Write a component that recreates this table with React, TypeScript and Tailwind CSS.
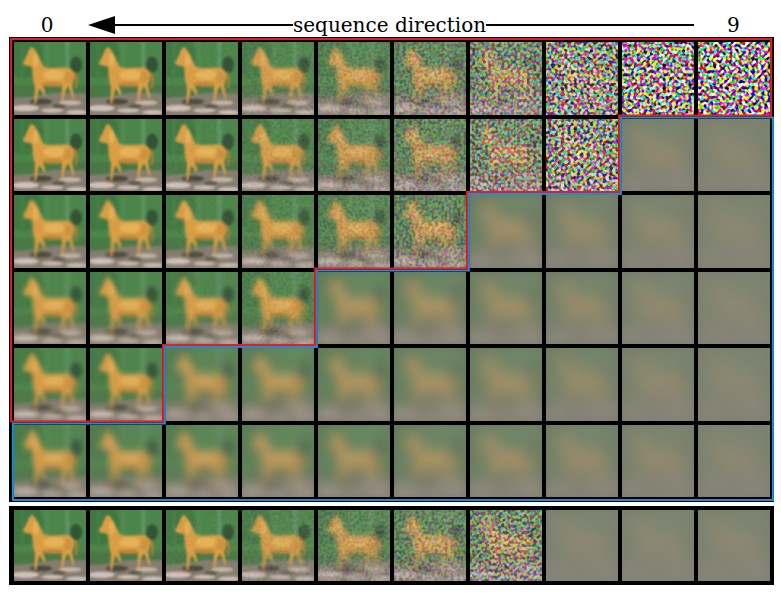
type Look = { blur: number; fade: number; noise: number }

// how many cells per row sit inside the red (noisy) staircase
const RED_COUNT = [10, 8, 6, 4, 2, 0]
const NOISE = [0, 0, 0.02, 0.05, 0.1, 0.2, 0.4, 0.68, 0.86, 0.95]
const ROW_BLUR = [0.5, 0.55, 0.65, 0.9, 1.0, 1.2]
const COLS = [0, 1, 2, 3, 4, 5, 6, 7, 8, 9]

function lookFor(r: number, c: number): Look {
  if (c < RED_COUNT[r]) {
    return {
      blur: ROW_BLUR[r] + (c >= 3 ? 0.18 * (c - 2) : 0),
      fade: c >= 3 ? 0.07 * (c - 2) : r >= 3 ? 0.06 : 0,
      noise: NOISE[c],
    }
  }
  return { blur: 1.3 + 0.35 * c, fade: Math.min(0.86, 0.12 + 0.085 * c), noise: 0 }
}

function bottomLook(c: number): Look {
  if (c < 7) return lookFor(0, c)
  return { blur: 4, fade: 0.86, noise: 0 }
}

function Scene() {
  return (
    <>
      <rect x="-4" y="-4" width="40" height="40" fill="#4c8549" />
      <ellipse cx="4" cy="6" rx="9" ry="10" fill="#3b6f3d" opacity="0.6" />
      <rect x="22.8" y="-4" width="1.8" height="22" fill="#7faa92" opacity="0.4" />
      <rect x="14" y="-4" width="1.4" height="18" fill="#62985f" opacity="0.35" />
      <rect x="3" y="-4" width="1.2" height="20" fill="#5e955d" opacity="0.3" />
      <ellipse cx="27.6" cy="10" rx="2.6" ry="3.6" fill="#2f4a33" opacity="0.85" />
      <rect x="-4" y="19" width="40" height="8" fill="#4a7845" />
      <path d="M-4 25 L8 24.2 L18 22.4 L36 22.8 L36 36 L-4 36 Z" fill="#857d6f" />
      <ellipse cx="12" cy="26.3" rx="5" ry="1.3" fill="#4b4a3d" />
      <ellipse cx="5" cy="29.2" rx="6" ry="1.4" fill="#d2c1ba" />
      <ellipse cx="17" cy="30.2" rx="5" ry="1" fill="#cdbcb4" />
      <ellipse cx="25" cy="26.8" rx="5" ry="1.1" fill="#c4b4a9" />
      <ellipse cx="28" cy="31" rx="5" ry="1" fill="#cfbfb8" />
      <ellipse cx="20" cy="28.3" rx="3" ry="0.8" fill="#5a5747" />
      <path
        d="M26.2 12.8 C28.4 13.5 29 16.5 27.8 20.5 L27 20.3 C27.6 17 27.2 15 25.8 14.2 Z"
        fill="#b27c3a"
      />
      <path
        d="M7.6 2.2 L8.6 2.6 C10 4 11.5 7 13 10.8 C15 11.8 19 11.4 22 11.3 C24.5 11.2 26.2 12 26.6 14.2 C26.9 16 26.3 17.5 25.8 18.6 L26.4 22.5 L26.9 24.6 L26.1 24.9 L25.2 22.4 L24.2 19.6 L23.3 20.5 L22.4 23 L21.9 26.2 L21.1 26.4 L21.2 22.6 L21.3 19.4 C19 19.8 15 19.8 12.8 19.2 L13.6 21.2 L14 23.2 L13.3 23.6 L12.2 21.6 L11.2 20.4 L10.5 23.5 L9.9 27 L9 27.2 L9.2 23.2 L9.3 19.6 C8.3 17 8.3 13.5 8 11 C7 10.4 5.8 10.4 4.6 10.1 L4 9 L5 7.4 C5.8 5.8 6.4 4 7 3 Z"
        fill="#d99e45"
      />
      <ellipse cx="18" cy="14.6" rx="5" ry="2.2" fill="#f0c26a" opacity="0.55" />
      <ellipse cx="9.6" cy="8" rx="1.3" ry="3" fill="#f0c26a" opacity="0.5" />
      <ellipse cx="17" cy="18.6" rx="5" ry="0.9" fill="#a86e2c" opacity="0.5" />
      <ellipse cx="24" cy="15.5" rx="2" ry="2.6" fill="#c38838" opacity="0.5" />
    </>
  )
}

function Tile({ id, seed, look, tall }: { id: string; seed: number; look: Look; tall?: boolean }) {
  return (
    <svg
      viewBox="0 0 32 32"
      preserveAspectRatio="none"
      className={tall ? "block w-[72px] h-[72.5px]" : "block w-[72px] h-[71px]"}
    >
      <defs>
        <filter
          id={id}
          filterUnits="userSpaceOnUse"
          x="-4"
          y="-4"
          width="40"
          height="40"
          colorInterpolationFilters="sRGB"
        >
          <feGaussianBlur in="SourceGraphic" stdDeviation={look.blur} result="bl" />
          <feFlood floodColor="#858478" result="gr" />
          <feComposite in="bl" in2="gr" operator="arithmetic" k1={0} k2={1 - look.fade} k3={look.fade} k4={0} result="mx" />
          <feTurbulence type="fractalNoise" baseFrequency="0.7" numOctaves={1} seed={seed} result="tu" />
          <feComponentTransfer in="tu" result="nz">
            <feFuncR type="linear" slope="6" intercept="-2.3" />
            <feFuncG type="linear" slope="6" intercept="-2.4" />
            <feFuncB type="linear" slope="6" intercept="-2.4" />
            <feFuncA type="linear" slope="0" intercept="1" />
          </feComponentTransfer>
          <feComposite in="mx" in2="nz" operator="arithmetic" k1={0} k2={1 - look.noise} k3={look.noise} k4={0} />
        </filter>
      </defs>
      <g filter={`url(#${id})`}>
        <Scene />
      </g>
    </svg>
  )
}

// red wraps the noisy staircase, blue wraps the faded part below it
const RED_PATH =
  "M3 385.5 L3 3 L763 3 L763 79.5 L611 79.5 L611 156 L459 156 L459 232.5 L307 232.5 L307 309 L155 309 L155 385.5 Z"
const BLUE_PATH =
  "M3 385.5 L3 462 L763 462 L763 79.5 L611 79.5 L611 156 L459 156 L459 232.5 L307 232.5 L307 309 L155 309 L155 385.5 Z"

export default function App() {
  return (
    <div className="w-[781px] h-[598px] bg-white font-['DejaVu_Serif',serif] text-black">
      <div className="flex items-start h-[37px] pt-[15px]">
        <span className="ml-[40px] w-[14px] text-[20px] leading-[20px] text-center">0</span>
        <svg width="205" height="20" className="ml-[34px] shrink-0">
          <polygon points="0,10 27,1 27,19" fill="#000" />
          <line x1="26" y1="10" x2="205" y2="10" stroke="#000" strokeWidth="2" />
        </svg>
        <span className="text-[20px] leading-[20px] whitespace-nowrap">sequence direction</span>
        <svg width="208" height="20" className="shrink-0">
          <line x1="0" y1="10" x2="208" y2="10" stroke="#000" strokeWidth="2" />
        </svg>
        <span className="ml-[33px] w-[12px] text-[20px] leading-[20px] text-center">9</span>
      </div>

      <div className="relative ml-[9px] w-[765px] h-[465px] bg-black pt-[5px] pl-[5px]">
        <div className="flex flex-col gap-[4px]">
          {RED_COUNT.map((_, r) => (
            <div key={r} className="flex gap-[4px]">
              {COLS.map((c) => (
                <Tile key={c} id={`t-${r}-${c}`} seed={r * 10 + c + 1} look={lookFor(r, c)} tall />
              ))}
            </div>
          ))}
        </div>
        <svg viewBox="0 0 765 465" className="absolute inset-0 w-[765px] h-[465px] pointer-events-none">
          <path d={BLUE_PATH} transform="translate(0.9 0.9)" fill="none" stroke="#1b8fd2" strokeWidth="2" />
          <path d={RED_PATH} transform="translate(-0.9 -0.9)" fill="none" stroke="#e21f26" strokeWidth="2" />
        </svg>
      </div>

      <div className="mt-[4px] ml-[9px] w-[765px] h-[79px] bg-black pt-[4px] pl-[5px]">
        <div className="flex gap-[4px]">
          {COLS.map((c) => (
            <Tile key={c} id={`b-${c}`} seed={100 + c} look={bottomLook(c)} />
          ))}
        </div>
      </div>
    </div>
  )
}
